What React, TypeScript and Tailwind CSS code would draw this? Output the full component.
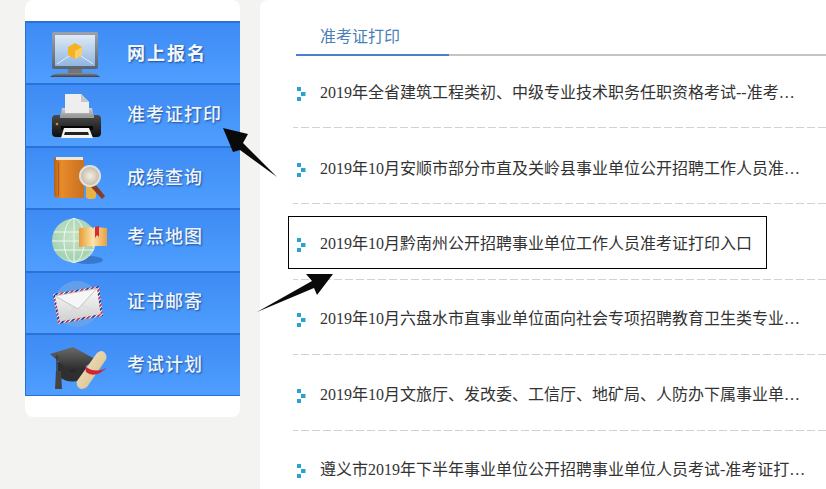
import React from "react";

const Monitor = () => (
  <svg width="52" height="50" viewBox="0 0 52 50" className="block">
    <defs>
      <linearGradient id="scr" x1="0" y1="0" x2="0" y2="1"><stop offset="0" stopColor="#dfeaf5" /><stop offset="1" stopColor="#8fb6e2" /></linearGradient>
      <linearGradient id="frame" x1="0" y1="0" x2="0" y2="1"><stop offset="0" stopColor="#9aa3ad" /><stop offset="1" stopColor="#5d6268" /></linearGradient>
      <linearGradient id="base" x1="0" y1="0" x2="0" y2="1"><stop offset="0" stopColor="#8d8f92" /><stop offset="1" stopColor="#3e4146" /></linearGradient>
    </defs>
    <rect x="4" y="4" width="46" height="37" rx="2" fill="url(#frame)" />
    <rect x="7" y="7" width="40" height="31" fill="url(#scr)" />
    <path d="M9 36 L27 24 L45 36" fill="none" stroke="#e6eef6" strokeWidth="1" />
    <path d="M27 15 L34 19 L34 27 L27 31 L20 27 L20 19 Z" fill="#f5b324" />
    <path d="M27 23 L34 19 L34 27 L27 31 Z" fill="#f9cf62" />
    <rect x="20" y="41" width="14" height="4" fill="#70757b" />
    <path d="M2 49 Q5 45 14 45 L40 45 Q49 45 52 49 Z" fill="url(#base)" />
  </svg>
);

const Printer = () => (
  <svg width="52" height="50" viewBox="0 0 52 50" className="block">
    <defs>
      <linearGradient id="pbody" x1="0" y1="0" x2="0" y2="1"><stop offset="0" stopColor="#4a4a4a" /><stop offset="1" stopColor="#0d0d0d" /></linearGradient>
      <linearGradient id="ptop" x1="0" y1="0" x2="0" y2="1"><stop offset="0" stopColor="#d3d3d3" /><stop offset="1" stopColor="#8d8d8d" /></linearGradient>
    </defs>
    <path d="M14 3 L30 3 L38 11 L38 24 L14 24 Z" fill="#eeeeee" />
    <path d="M30 3 L30 11 L38 11 Z" fill="#c6c6c6" />
    <path d="M11 17 L14 17 L14 22 L38 22 L38 17 L41 17 L43 27 L9 27 Z" fill="url(#ptop)" />
    <rect x="1" y="24" width="49" height="22" rx="4" fill="url(#pbody)" />
    <path d="M9 24 L43 24 L43 27 L9 27 Z" fill="#9b9b9b" />
    <circle cx="6" cy="33" r="1.3" fill="#d98b26" />
    <rect x="10" y="35" width="32" height="4" fill="#050505" />
    <path d="M13 37 L38 37 L42 47 L10 47 Z" fill="#f4f4f4" />
    <path d="M14 41 L37 41 L38 44 L13 44 Z" fill="#222222" />
  </svg>
);

const BookSearch = () => (
  <svg width="56" height="50" viewBox="0 0 56 50" className="block">
    <defs>
      <linearGradient id="book" x1="0" y1="0" x2="1" y2="0"><stop offset="0" stopColor="#b65f18" /><stop offset="0.25" stopColor="#e88b2c" /><stop offset="1" stopColor="#c96f1f" /></linearGradient>
      <radialGradient id="lens"><stop offset="0" stopColor="#f4efe4" /><stop offset="1" stopColor="#c5b8a2" /></radialGradient>
    </defs>
    <path d="M1 7 Q1 4 4 4 L29 4 L31 7 L31 45 L5 45 Q1 45 1 41 Z" fill="url(#book)" />
    <rect x="3" y="4" width="27" height="3" fill="#f1e6d0" />
    <rect x="5" y="9" width="1" height="34" fill="#8f4a12" opacity="0.6" />
    <rect x="33" y="31" width="10" height="15" rx="3" fill="#e8b247" />
    <path d="M42 31 L52 43 L49 46 L38 34 Z" fill="#8a3b22" />
    <circle cx="37" cy="23" r="10" fill="url(#lens)" stroke="#dfe0e0" strokeWidth="2" />
  </svg>
);

const Globe = () => (
  <svg width="56" height="50" viewBox="0 0 56 50" className="block">
    <defs>
      <radialGradient id="glb" cx="0.45" cy="0.4" r="0.65"><stop offset="0" stopColor="#c6e3c6" /><stop offset="0.8" stopColor="#a5d2b2" /><stop offset="1" stopColor="#dff0e5" /></radialGradient>
      <linearGradient id="mapb" x1="0" y1="0" x2="1" y2="0"><stop offset="0" stopColor="#e89a32" /><stop offset="0.48" stopColor="#fbe2a8" /><stop offset="0.52" stopColor="#fbe2a8" /><stop offset="1" stopColor="#e99f38" /></linearGradient>
    </defs>
    <ellipse cx="36" cy="45" rx="15" ry="4" fill="#2a62ad" opacity="0.6" />
    <circle cx="22" cy="25.5" r="22" fill="url(#glb)" />
    <g fill="none" stroke="#eef7ef" strokeWidth="1">
      <ellipse cx="22" cy="25.5" rx="10" ry="22" />
      <line x1="22" y1="3.5" x2="22" y2="47.5" />
      <line x1="2" y1="17" x2="42" y2="17" />
      <line x1="0" y1="26" x2="44" y2="26" />
      <line x1="2" y1="35" x2="42" y2="35" />
    </g>
    <path d="M27 13 L40 12 L41 14 L42 12 L55 13 L55 31 L42 31 L41 33 L40 31 L27 32 Z" fill="url(#mapb)" />
    <path d="M43 12 L47 11 L47 22 L45 20 L43 23 Z" fill="#d8293a" />
  </svg>
);

const Mail = () => (
  <svg width="56" height="50" viewBox="0 0 56 50" className="block">
    <defs>
      <linearGradient id="env" x1="0" y1="0" x2="0" y2="1"><stop offset="0" stopColor="#fbfbfb" /><stop offset="1" stopColor="#cfcfcf" /></linearGradient>
      <pattern id="air" width="6" height="6" patternUnits="userSpaceOnUse" patternTransform="rotate(45)">
        <rect width="6" height="6" fill="#fff" />
        <rect width="2" height="6" fill="#c73a4b" />
        <rect x="3" width="2" height="6" fill="#2d3f8f" />
      </pattern>
    </defs>
    <circle cx="27" cy="26" r="23" fill="#6fa3e6" opacity="0.75" />
    <path d="M3 16 L49 8 L53 38 L8 46 Z" fill="url(#air)" />
    <path d="M5 18 L47 10.5 L50.5 36 L10 43.5 Z" fill="url(#env)" />
    <path d="M10 43.5 L26 28 M50.5 36 L32 27" stroke="#d9d9d9" strokeWidth="1" />
    <path d="M5 18 L28 31 L47 10.5 Z" fill="#f6f6f6" stroke="#c4c4c4" strokeWidth="1" />
  </svg>
);

const Cap = () => (
  <svg width="60" height="50" viewBox="0 0 60 50" className="block">
    <defs>
      <linearGradient id="capg" x1="0" y1="0" x2="0" y2="1"><stop offset="0" stopColor="#6a6a6a" /><stop offset="1" stopColor="#232323" /></linearGradient>
      <linearGradient id="scroll" x1="0" y1="0" x2="1" y2="1"><stop offset="0" stopColor="#f6e9c7" /><stop offset="1" stopColor="#d4b882" /></linearGradient>
    </defs>
    <path d="M8 22 L8 36 Q20 46 36 38 L36 24 Z" fill="#2f2f2f" />
    <path d="M0 14 L23 7 L47 20 L22 33 Z" fill="url(#capg)" />
    <path d="M7 15 L7 32" stroke="#3a3a3a" strokeWidth="1.5" />
    <path d="M6 31 L11 31 L12 49 L5 49 Z" fill="#444" />
    <path d="M27 41 L47 13 Q52 9 55 13 Q58 17 55 21 L37 47 Q31 51 28 47 Q26 44 27 41 Z" fill="url(#scroll)" />
    <path d="M35 26 Q44 34 57 28 L50 33 Q42 37 36 32 Z" fill="#cf2433" />
  </svg>
);

const items: { label: string; icon: React.ReactNode; wide?: boolean; iconBox: string; labelBox: string }[] = [
  { label: "网上报名", icon: <Monitor />, wide: true, iconBox: "pl-[22px]", labelBox: "pb-[2px]" },
  { label: "准考证打印", icon: <Printer />, iconBox: "pl-[25px]", labelBox: "pb-[4px]" },
  { label: "成绩查询", icon: <BookSearch />, iconBox: "pl-[27px]", labelBox: "pb-[2px]" },
  { label: "考点地图", icon: <Globe />, iconBox: "pl-[26px]", labelBox: "pb-[10px]" },
  { label: "证书邮寄", icon: <Mail />, iconBox: "pl-[24px]", labelBox: "pb-[4px]" },
  { label: "考试计划", icon: <Cap />, iconBox: "pl-[24px]", labelBox: "pb-[2px]" },
];

const rows: { text: string; pad: string }[] = [
  { text: "2019年全省建筑工程类初、中级专业技术职务任职资格考试--准考…", pad: "pb-[23px]" },
  { text: "2019年10月安顺市部分市直及关岭县事业单位公开招聘工作人员准…", pad: "pb-[23px]" },
  { text: "2019年10月黔南州公开招聘事业单位工作人员准考证打印入口", pad: "pb-[24px]" },
  { text: "2019年10月六盘水市直事业单位面向社会专项招聘教育卫生类专业…", pad: "pb-[24px]" },
  { text: "2019年10月文旅厅、发改委、工信厅、地矿局、人防办下属事业单…", pad: "pb-[24px]" },
  { text: "遵义市2019年下半年事业单位公开招聘事业单位人员考试-准考证打…", pad: "pb-[25px]" },
];

const Bullet = () => (
  <svg width="9" height="14" viewBox="0 0 9 14" className="mt-[2px] shrink-0">
    <rect x="0" y="0" width="4" height="4" fill="#2ba3cf" />
    <rect x="4" y="5" width="4.5" height="4" fill="#2ba3cf" />
    <rect x="0" y="10" width="4" height="4" fill="#2ba3cf" />
  </svg>
);

export default function App() {
  return (
    <div className="relative h-[489px] w-[826px] overflow-hidden bg-[#f3f3f2] font-['Liberation_Serif','Noto_Sans_CJK_SC',serif]">
      <div className="flex h-full items-start pl-[25px]">
        <aside className="h-[417px] w-[215px] rounded-lg bg-white pt-[21px]">
          <ul className="border-l border-[#2b6fd1] font-['Noto_Sans_CJK_SC',sans-serif]">
            {items.map((it) => (
              <li
                key={it.label}
                className="flex h-[62.4px] items-center border-t-2 border-[#2c72d6] bg-gradient-to-b from-[#3d8bf4] to-[#4f9eff] last:h-[63px] last:border-b"
              >
                <div className={`w-[101px] shrink-0 ${it.iconBox}`}>{it.icon}</div>
                <div className={it.labelBox}>
                  <span
                    className={
                      it.wide
                        ? "text-[18px] font-bold tracking-[2px] text-[#f4f8fc] [text-shadow:1px_1px_2px_#1d4f9a]"
                        : "text-[18px] font-medium tracking-[1px] text-[#eef4fb] [text-shadow:1px_1px_2px_#1d4f9a]"
                    }
                  >
                    {it.label}
                  </span>
                </div>
              </li>
            ))}
          </ul>
        </aside>
        <main className="ml-5 h-full flex-1 rounded-tl-lg bg-white pl-9">
          <div className="relative h-14 border-b-2 border-[#c4c4c4]">
            <span className="absolute left-6 top-[26px] text-[16px] leading-[22px] text-[#4c7fb9]">准考证打印</span>
            <span className="absolute bottom-[-2px] left-0 h-[2px] w-[153px] bg-[#4a7fd0]" />
          </div>
          <ul className="-ml-[3px]">
            {rows.map((r) => (
              <li
                key={r.text}
                className={`flex h-[75.75px] items-end bg-[linear-gradient(90deg,#d2d2d2_8px,transparent_8px)] bg-[length:11px_1px] bg-bottom bg-repeat-x pl-[4px] first:h-[72px] ${r.pad}`}
              >
                <div className="flex h-6 items-center">
                  <Bullet />
                  <span className="ml-[14px] whitespace-nowrap text-[16px] leading-6 text-[#333333]">{r.text}</span>
                </div>
              </li>
            ))}
          </ul>
        </main>
      </div>
      <div className="absolute left-[288px] top-[216px] h-[53px] w-[479px] border border-black" />
      <svg className="absolute left-0 top-0" width="826" height="489" viewBox="0 0 826 489">
        <polygon points="223,128 248,134 243,143 277,177 240,150 233,152" fill="#0a0a0a" />
        <polygon points="257,312 312,281 306,274 333,274 317,295 314,288" fill="#0a0a0a" />
      </svg>
    </div>
  );
}
